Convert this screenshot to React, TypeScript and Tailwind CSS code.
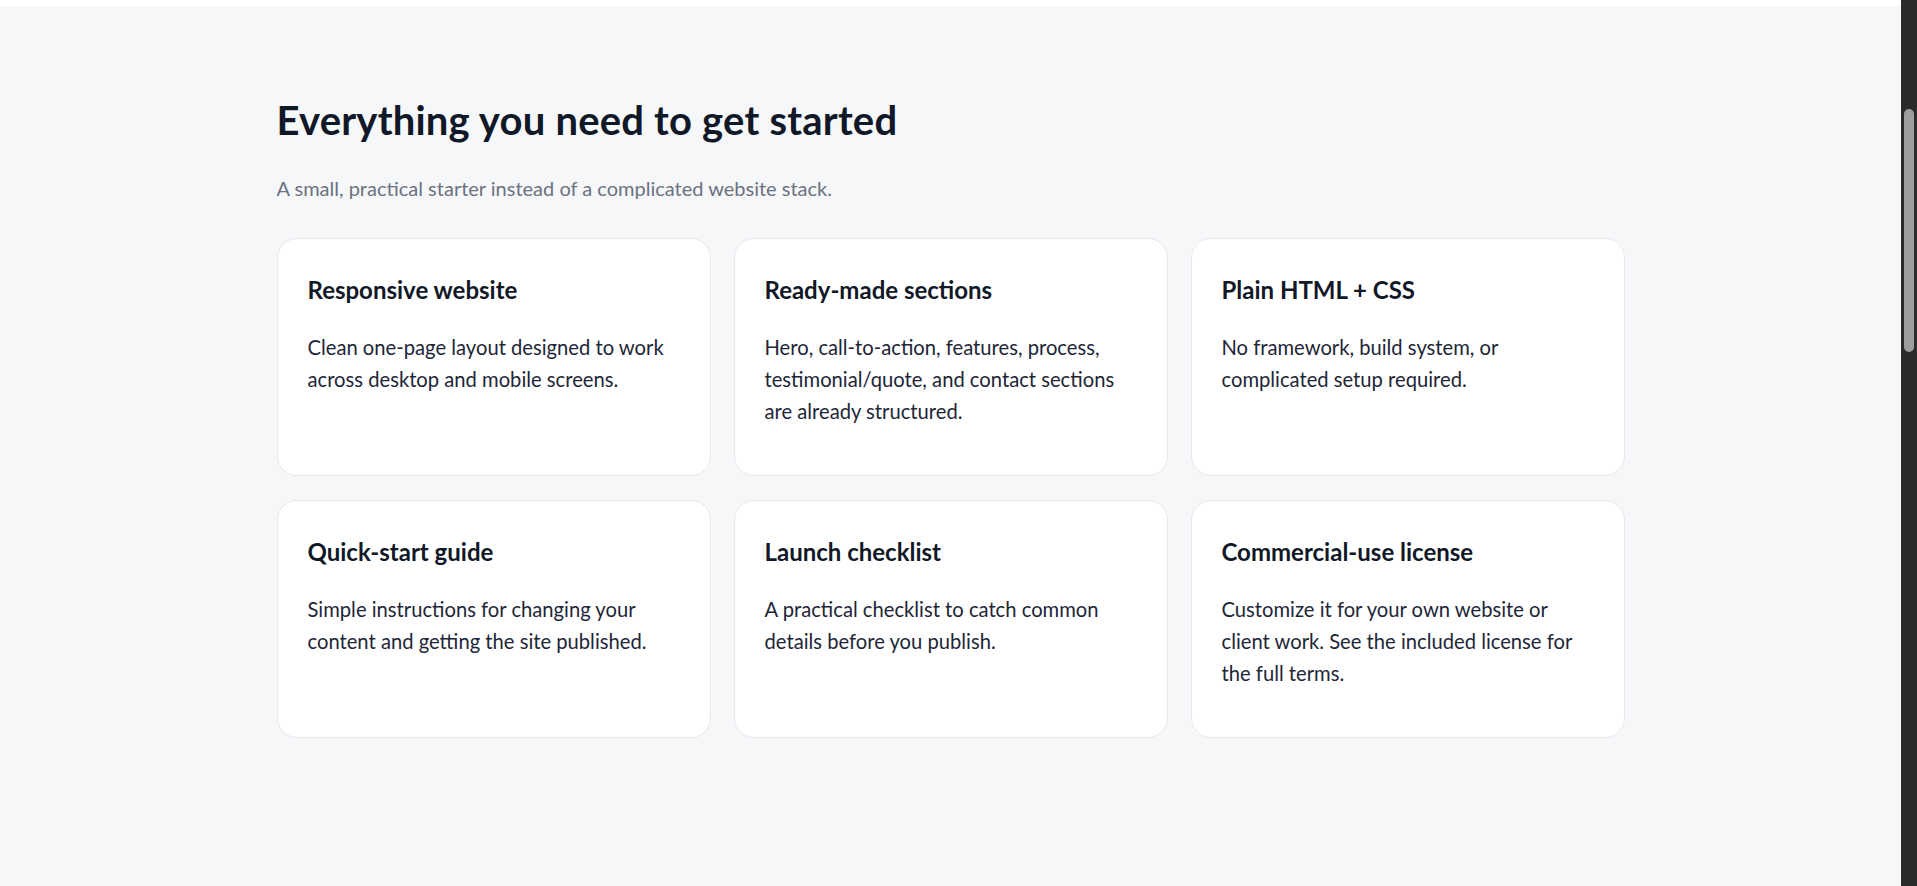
import React from 'react';

interface Feature {
  title: string;
  body: string;
}

const features: Feature[] = [
  {
    title: 'Responsive website',
    body: 'Clean one-page layout designed to work across desktop and mobile screens.',
  },
  {
    title: 'Ready-made sections',
    body: 'Hero, call-to-action, features, process, testimonial/quote, and contact sections are already structured.',
  },
  {
    title: 'Plain HTML + CSS',
    body: 'No framework, build system, or complicated setup required.',
  },
  {
    title: 'Quick-start guide',
    body: 'Simple instructions for changing your content and getting the site published.',
  },
  {
    title: 'Launch checklist',
    body: 'A practical checklist to catch common details before you publish.',
  },
  {
    title: 'Commercial-use license',
    body: 'Customize it for your own website or client work. See the included license for the full terms.',
  },
];

function FeatureCard({ title, body }: Feature) {
  return (
    <div className="min-h-[238px] rounded-[20px] border border-[#e6e8ec] bg-white px-[30px] pt-[35px]">
      <h3 className="text-[24px] font-bold leading-[1.3] text-[#111827]">{title}</h3>
      <p className="mt-[26px] text-[20.2px] leading-[32px] text-pretty text-[#1e2638]">{body}</p>
    </div>
  );
}

export default function App() {
  return (
    <div
      className="flex h-[886px] w-full overflow-hidden bg-[#f6f7f9]"
      style={{ fontFamily: 'Lato, "Noto Sans", sans-serif' }}
    >
      <div className="flex min-w-0 flex-1 flex-col">
        <div className="h-[6px] bg-white" />
        <section className="mx-auto w-[1348px] pt-[90px]">
          <h2 className="text-[40px] font-bold leading-[1.2] tracking-[0.005em] text-[#111827]">
            Everything you need to get started
          </h2>
          <p className="mt-[29px] text-[20px] leading-[1.5] text-[#6b7280]">
            A small, practical starter instead of a complicated website stack.
          </p>
          <div className="mt-[35px] grid grid-cols-3 gap-x-[23px] gap-y-[24px]">
            {features.map((f) => (
              <FeatureCard key={f.title} {...f} />
            ))}
          </div>
        </section>
      </div>

      {/* dark scrollbar track */}
      <div className="w-[16px] shrink-0 bg-[#2b2b2b] px-[3px] pt-[109px]">
        <div className="h-[243px] rounded-full bg-[#9e9e9e]" />
      </div>
    </div>
  );
}
